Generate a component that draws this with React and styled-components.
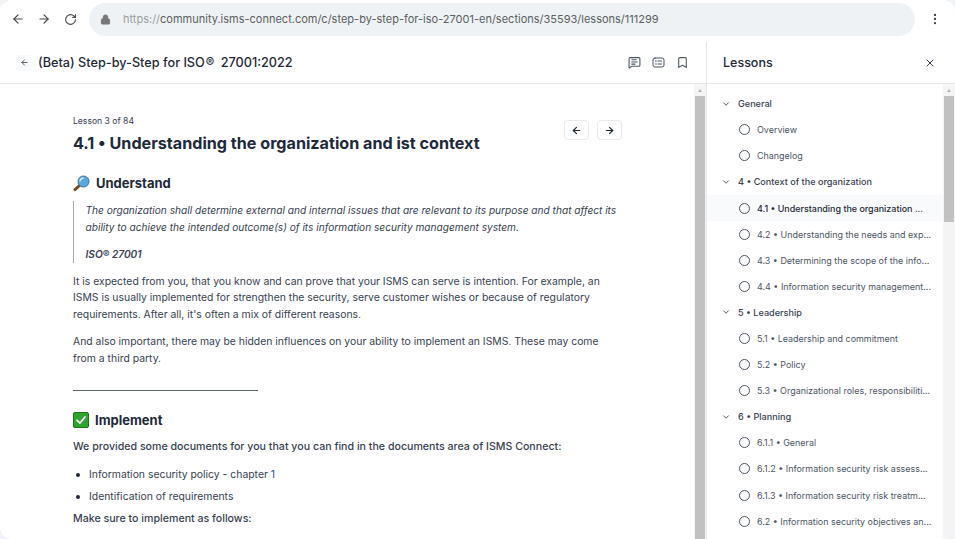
import React from 'react'
import styled, { createGlobalStyle } from 'styled-components'
import { ArrowLeft, ArrowRight, RotateCw, Lock, EllipsisVertical, MessageSquareText, Bookmark, X, ChevronDown } from 'lucide-react'

const Global = createGlobalStyle`
html,body{margin:0;padding:0;background:#f1f3f6;}
body{font-family:Inter,"Liberation Sans",sans-serif;color:#1e2a3a;}
*{box-sizing:border-box;}
`
const Win = styled.div`
width:955px;height:539px;background:#fff;border-radius:12px;overflow:hidden;display:flex;flex-direction:column;
`
const Toolbar = styled.div`
height:42px;flex:none;display:flex;align-items:center;padding:0 0 4px 5px;
`
const NavBtn = styled.div`
width:26px;display:flex;justify-content:center;color:#474747;
`
const UrlBar = styled.div`
width:826px;height:33px;margin-left:6px;border-radius:17px;background:#eff2f4;display:flex;align-items:center;padding-left:11px;
font-size:11px;color:#5a5d61;white-space:nowrap;
`
const Scheme = styled.span`color:#9a9da1;margin-left:12px;`
const Dots = styled.div`margin-left:13px;display:flex;color:#474747;`
const Body = styled.div`flex:1;display:flex;min-height:0;`
const MainCol = styled.div`
width:707px;flex:none;display:flex;flex-direction:column;border-right:1px solid #e5e7eb;
`
const SideCol = styled.div`flex:1;display:flex;flex-direction:column;min-width:0;`
const Head = styled.div`
height:42px;flex:none;border-bottom:1px solid #e5e7eb;display:flex;align-items:center;
`
const BackBtn = styled.div`
width:16px;height:16px;margin-left:16px;background:#f8f9fa;border-radius:3px;display:flex;align-items:center;justify-content:center;color:#4b5563;
`
const CourseTitle = styled.div`
margin-left:6px;font-size:12.7px;font-weight:500;color:#1f2937;flex:1;
`
const Reg = styled.span`margin:0 3px 0 1px;`
const HeadIcons = styled.div`display:flex;gap:11px;padding-right:17px;color:#4b5563;align-items:center;`
const Scroller = styled.div`flex:1;display:flex;min-height:0;overflow:hidden;`
const Content = styled.div`flex:1;min-width:0;padding:27px 73px 0 73px;position:relative;overflow:hidden;`
const Track = styled.div`
width:12px;flex:none;background:#f4f4f4;padding-top:12px;display:flex;justify-content:center;position:relative;
&::before{content:"";position:absolute;top:5px;left:3.5px;border-left:2.5px solid transparent;border-right:2.5px solid transparent;border-bottom:3px solid #b4b4b4;}
`
const Thumb = styled.div`width:10px;height:${p=>p.$h}px;background:#c1c1c1;flex:none;`
const LessonNo = styled.div`font-size:8.6px;line-height:20px;color:#374151;`
const LessonTitle = styled.h1`margin:0;font-size:16.15px;line-height:25px;font-weight:700;color:#1e293b;white-space:nowrap;`
const Pager = styled.div`position:absolute;top:36px;right:72px;display:flex;gap:8px;`
const PageBtn = styled.div`
width:25px;height:20px;border:1px solid #e8eaed;border-radius:4px;background:#fff;display:flex;align-items:center;justify-content:center;color:#1f2937;
`
const H2 = styled.h2`
margin:${p=>p.$mt}px 0 0;font-size:13px;line-height:20px;font-weight:700;color:#1f2937;display:flex;align-items:center;gap:6px;
`
const Quote = styled.blockquote`
margin:8px 0 0;border-left:1.5px solid #a3aab5;padding:1px 0 0 11.5px;font-style:italic;font-size:10.15px;line-height:16.5px;color:#374151;
`
const QuoteLine = styled.p`margin:${p=>p.$mt||0}px 0 0;white-space:nowrap;font-weight:${p=>p.$b?600:400};`
const P = styled.p`
margin:${p=>p.$mt}px 0 0;font-size:${p=>p.$b?10.63:10.4}px;line-height:16.5px;color:#374151;white-space:nowrap;font-weight:${p=>p.$b?500:400};
`
const Rule = styled.div`margin-top:23px;width:185px;height:1px;background:#5b6470;`
const Ul = styled.ul`margin:11px 0 0;padding:0 0 0 16px;list-style:none;font-size:10.4px;line-height:16.5px;color:#374151;`
const Li = styled.li`
margin-bottom:5.5px;position:relative;
&::before{content:"";position:absolute;left:-13px;top:6px;width:4px;height:4px;border-radius:50%;background:#1f2937;}
`
const Link = styled.span`color:#1e4fa8;`
const SideTitle = styled.div`margin-left:16px;font-size:12.5px;font-weight:500;color:#1f2937;flex:1;`
const CloseBtn = styled.div`padding-right:19px;display:flex;color:#374151;`
const List = styled.div`flex:1;min-width:0;padding-top:6.6px;overflow:hidden;`
const GroupRow = styled.div`
height:26.1px;display:flex;align-items:center;padding-left:14px;gap:7px;font-size:9.1px;font-weight:500;color:#374151;white-space:nowrap;
`
const LessonRow = styled.div`
height:26.1px;display:flex;align-items:center;padding-left:32px;gap:7px;font-size:8.95px;color:${p=>p.$on?'#1f2937':'#4b5563'};font-weight:${p=>p.$on?500:400};
background:${p=>p.$on?'#f8fafc':'transparent'};white-space:nowrap;
`
const Circle = styled.span`
width:11px;height:11px;border-radius:50%;border:1.2px solid #4b5563;flex:none;
`

const MagnifierEmoji = () => (
  <svg width="17" height="17" viewBox="0 0 17 17">
    <path d="M6.5 10.5 L2 14.6" stroke="#7a4a1e" strokeWidth="3" strokeLinecap="round" />
    <circle cx="10.5" cy="6.5" r="5.5" fill="#5aa9dc" stroke="#3d6f94" strokeWidth="1" />
    <path d="M7 6.5a3.5 3.5 0 0 1 3.5-3.5" stroke="#d7eefb" strokeWidth="1.4" fill="none" />
  </svg>
)
const CheckEmoji = () => (
  <svg width="16" height="16" viewBox="0 0 16 16">
    <rect x=".5" y=".5" width="15" height="15" rx="1.5" fill="#2fa52f" stroke="#1f6f1f" />
    <path d="M4 8.3 7 11l5-6" stroke="#fff" strokeWidth="1.8" fill="none" strokeLinecap="round" strokeLinejoin="round" />
  </svg>
)
const ChecklistIcon = () => (
  <svg width="13" height="13" viewBox="0 0 13 13" fill="none" stroke="currentColor" strokeWidth="1" strokeLinecap="round">
    <rect x="1" y="2" width="11" height="9" rx="2" />
    <path d="M3.3 5h1M3.3 8h1M6 5h3.6M6 8h3.6" />
  </svg>
)

const nav = [
  { g: 'General', items: ['Overview', 'Changelog'] },
  { g: '4 • Context of the organization', items: ['4.1 • Understanding the organization ...', '4.2 • Understanding the needs and exp...', '4.3 • Determining the scope of the info...', '4.4 • Information security management...'] },
  { g: '5 • Leadership', items: ['5.1 • Leadership and commitment', '5.2 • Policy', '5.3 • Organizational roles, responsibiliti...'] },
  { g: '6 • Planning', items: ['6.1.1 • General', '6.1.2 • Information security risk assess...', '6.1.3 • Information security risk treatm...', '6.2 • Information security objectives an...'] },
]

export default function App() {
  return (
    <Win>
      <Global />
      <Toolbar>
        <NavBtn><ArrowLeft size={14} /></NavBtn>
        <NavBtn><ArrowRight size={14} /></NavBtn>
        <NavBtn><RotateCw size={13} /></NavBtn>
        <UrlBar>
          <Lock size={11} fill="#777" color="#777" />
          <Scheme>https://</Scheme>community.isms-connect.com/c/step-by-step-for-iso-27001-en/sections/35593/lessons/111299
        </UrlBar>
        <Dots><EllipsisVertical size={14} /></Dots>
      </Toolbar>
      <Body>
        <MainCol>
          <Head>
            <BackBtn><ArrowLeft size={9} strokeWidth={2.5} /></BackBtn>
            <CourseTitle>(Beta) Step-by-Step for ISO<Reg>®</Reg> 27001:2022</CourseTitle>
            <HeadIcons>
              <MessageSquareText size={13} />
              <ChecklistIcon />
              <Bookmark size={13} />
            </HeadIcons>
          </Head>
          <Scroller>
            <Content>
              <LessonNo>Lesson 3 of 84</LessonNo>
              <LessonTitle>4.1 • Understanding the organization and ist context</LessonTitle>
              <Pager>
                <PageBtn><ArrowLeft size={11} strokeWidth={2.5} /></PageBtn>
                <PageBtn><ArrowRight size={11} strokeWidth={2.5} /></PageBtn>
              </Pager>
              <H2 $mt={17}><MagnifierEmoji />Understand</H2>
              <Quote>
                <QuoteLine>The organization shall determine external and internal issues that are relevant to its purpose and that affect its</QuoteLine>
                <QuoteLine>ability to achieve the intended outcome(s) of its information security management system.</QuoteLine>
                <QuoteLine $mt={11} $b>ISO® 27001</QuoteLine>
              </Quote>
              <P $mt={11}>It is expected from you, that you know and can prove that your ISMS can serve is intention. For example, an</P>
              <P $mt={0}>ISMS is usually implemented for strengthen the security, serve customer wishes or because of regulatory</P>
              <P $mt={0}>requirements. After all, it's often a mix of different reasons.</P>
              <P $mt={11}>And also important, there may be hidden influences on your ability to implement an ISMS. These may come</P>
              <P $mt={0}>from a third party.</P>
              <Rule />
              <H2 $mt={19}><CheckEmoji />Implement</H2>
              <P $mt={9} $b>We provided some documents for you that you can find in the documents area of ISMS Connect:</P>
              <Ul>
                <Li>Information security policy - chapter <Link>1</Link></Li>
                <Li>Identification of requirements</Li>
              </Ul>
              <P $mt={0} $b>Make sure to implement as follows:</P>
            </Content>
            <Track><Thumb $h={460} /></Track>
          </Scroller>
        </MainCol>
        <SideCol>
          <Head>
            <SideTitle>Lessons</SideTitle>
            <CloseBtn><X size={12} /></CloseBtn>
          </Head>
          <Scroller>
            <List>
              {nav.map(sec => (
                <div key={sec.g}>
                  <GroupRow><ChevronDown size={10} />{sec.g}</GroupRow>
                  {sec.items.map(it => (
                    <LessonRow key={it} $on={it.startsWith('4.1')}><Circle />{it}</LessonRow>
                  ))}
                </div>
              ))}
            </List>
            <Track><Thumb $h={126} /></Track>
          </Scroller>
        </SideCol>
      </Body>
    </Win>
  )
}
